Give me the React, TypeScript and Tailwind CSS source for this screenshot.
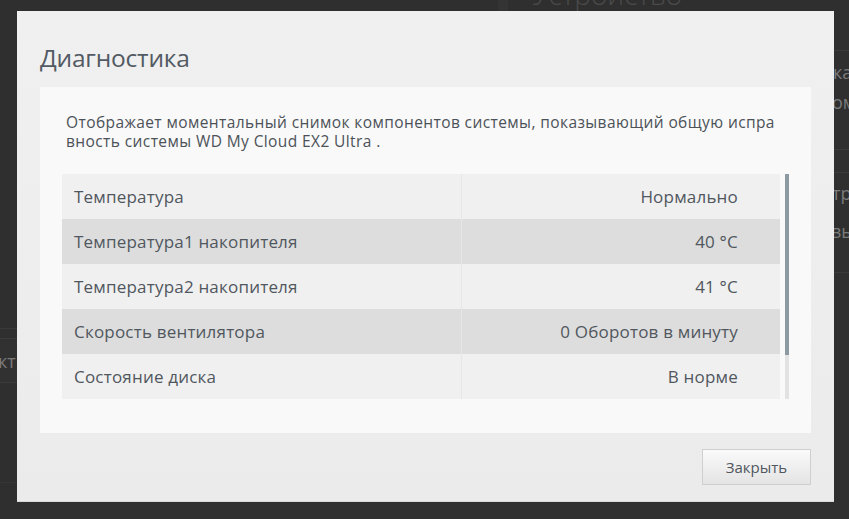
const rows = [
  { label: "Температура", value: "Нормально" },
  { label: "Температура1 накопителя", value: "40 °C" },
  { label: "Температура2 накопителя", value: "41 °C" },
  { label: "Скорость вентилятора", value: "0 Оборотов в минуту" },
  { label: "Состояние диска", value: "В норме" },
];

function Backdrop() {
  return (
    <div className="flex h-full text-[#7a7a7a]">
      {/* left strip */}
      <div className="w-[17px] flex flex-col overflow-hidden">
        <div className="h-[328px]" />
        <div className="h-[10px] border-t border-[#3a3a3a]" />
        <div className="h-[45px] border-t border-b border-[#3a3a3a] bg-[#313131] text-[18px] leading-[45px] -indent-[2px] whitespace-nowrap">кт</div>
        <div className="h-[100px] border-b border-[#353535]" />
      </div>
      {/* middle */}
      <div className="flex-1 flex">
        <div className="w-[481px]" />
        <div className="w-[10px] h-[11px] bg-[#343434]" />
        <div className="pl-[24px] -mt-[22px] text-[28px] font-light text-[#4a4a4a] leading-[32px]">Устройство</div>
      </div>
      {/* right strip */}
      <div className="w-[15px] flex flex-col overflow-hidden whitespace-nowrap text-[18px]">
        <div className="h-[50px]" />
        <div className="h-[100px] border-t border-b border-[#3a3a3a]">
          <div className="mt-[6px] leading-[30px] -ml-[1px]">ка</div>
          <div className="leading-[30px] -ml-[2px]">ом</div>
        </div>
        <div className="h-[22px]" />
        <div className="h-[101px] border-t border-b border-[#3a3a3a]">
          <div className="mt-[5px] leading-[30px] -ml-[2px]">тр</div>
          <div className="mt-[8px] leading-[30px] -ml-[3px]">вы</div>
        </div>
      </div>
    </div>
  );
}

export default function App() {
  return (
    <div
      className="relative w-[849px] h-[519px] overflow-hidden bg-[#2f2f2f]"
      style={{ fontFamily: '"Open Sans", "Noto Sans", sans-serif' }}
    >
      <Backdrop />

      {/* Modal */}
      <div className="absolute left-[17px] top-[11px] w-[817px] h-[491px] bg-gradient-to-b from-[#f0f0f0] to-[#ebebeb] border-b border-[#d8d8d8] px-[23px] flex flex-col">
        <h1 className="pt-[32px] h-[76px] text-[24.5px] leading-[30px] text-[#525a63] tracking-[-0.2px]">Диагностика</h1>

        <div className="h-[346px] bg-[#f9f9f9] pl-[22px] pr-[22px] flex flex-col">
          <div className="pt-[26px] pl-[4px] text-[15.5px] leading-[19px] tracking-[0.4px] text-[#4c5258] h-[87px]">
            <p className="whitespace-nowrap">Отображает моментальный снимок компонентов системы, показывающий общую испра</p>
            <p className="whitespace-nowrap">вность системы WD My Cloud EX2 Ultra .</p>
          </div>

          <div className="flex gap-[5px]">
            <div className="w-[718px] flex flex-col">
              {rows.map((r, i) => (
                <div
                  key={r.label}
                  className={
                    "h-[45px] flex items-center text-[17px] tracking-[0.2px] text-[#50575e] " +
                    (i % 2 === 1 ? "bg-[#dddddd]" : "bg-[#f0f0f0]")
                  }
                >
                  <div className="w-[400px] h-full flex items-center pl-[12px] border-r border-[#e6e6e6]">{r.label}</div>
                  <div className="flex-1 text-right pr-[42px]">{r.value}</div>
                </div>
              ))}
            </div>
            {/* scrollbar */}
            <div className="w-[4px] h-[225px] bg-[#e2e2e2] flex flex-col">
              <div className="h-[181px] bg-[#8e9aa2]" />
            </div>
          </div>
        </div>

        <div className="flex justify-end pt-[16px]">
          <button className="w-[109px] h-[36px] bg-gradient-to-b from-[#fafafa] to-[#e4e4e4] border border-[#cfcfcf] text-[15px] text-[#50575e]">
            Закрыть
          </button>
        </div>
      </div>
    </div>
  );
}
